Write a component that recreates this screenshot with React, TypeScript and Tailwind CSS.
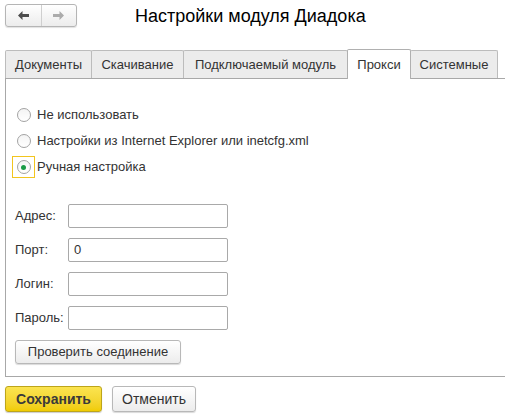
import React from 'react';

const tabs = [
  { title: 'Документы', w: 'w-[87px]' },
  { title: 'Скачивание', w: 'w-[93px]' },
  { title: 'Подключаемый модуль', w: 'w-[165px]' },
  { title: 'Прокси', w: 'w-[64px]' },
  { title: 'Системные', w: 'w-[88px]' },
];
const fields = [
  { label: 'Адрес:', value: '' },
  { label: 'Порт:', value: '0' },
  { label: 'Логин:', value: '' },
  { label: 'Пароль:', value: '' },
];
const options = ['Не использовать', 'Настройки из Internet Explorer или inetcfg.xml', 'Ручная настройка'];

const Radio: React.FC<{ checked?: boolean }> = ({ checked }) => (
  <span className="w-[14px] h-[14px] rounded-full border border-[#a3a3a3] bg-gradient-to-b from-[#f4f4f4] to-white flex items-center justify-center">
    {checked && <span className="w-[5px] h-[5px] rounded-full bg-[#199b45]" />}
  </span>
);

export default function App() {
  const active = 3;
  return (
    <div
      className="w-[505px] h-[415px] overflow-hidden bg-white text-[13px] text-[#333]"
      style={{ fontFamily: '"Liberation Sans", Arial, sans-serif' }}
    >
      {/* шапка */}
      <div className="flex items-center pt-[4px] pl-[5px]">
        <div className="flex w-[72px] h-[23px] rounded-[3px] border border-[#b5b5b5] bg-gradient-to-b from-white to-[#ececec] shadow-[0_1px_1px_rgba(0,0,0,0.12)]">
          <button className="flex-1 flex items-center justify-center border-r border-[#cfcfcf]">
            <svg width="11" height="9" viewBox="0 0 11 9">
              <path d="M0 4.5 L4.5 0 V3 H11 V6 H4.5 V9 Z" fill="#4d4d4d" />
            </svg>
          </button>
          <button className="flex-1 flex items-center justify-center">
            <svg width="11" height="9" viewBox="0 0 11 9">
              <path d="M11 4.5 L6.5 0 V3 H0 V6 H6.5 V9 Z" fill="#ababab" />
            </svg>
          </button>
        </div>
        <h1 className="ml-[58px] text-[18px] text-black leading-none">Настройки модуля Диадока</h1>
      </div>

      {/* вкладки */}
      <div className="flex items-end mt-[22px] pl-[5px] h-[29px]">
        {tabs.map((t, i) => (
          <div
            key={t.title}
            className={
              i === active
                ? `${t.w} relative z-10 h-[30px] -mb-px -ml-px flex items-center justify-center bg-white border border-b-0 border-[#b0b0b0] rounded-t-[2px]`
                : `${t.w} h-[28px] flex items-center justify-center bg-[#ececec] border border-b-0 border-[#bcbcbc] rounded-t-[2px] ${i === 0 ? '' : '-ml-px'}`
            }
          >
            {t.title}
          </div>
        ))}
      </div>

      {/* панель */}
      <div className="ml-[5px] w-[520px] h-[299px] border border-[#a8a8a8] pt-[23px] pl-[6px]">
        {options.map((o, i) => (
          <div key={o} className="h-[26px] flex items-center">
            <span
              className={`w-[23px] h-[22px] flex items-center justify-center border ${
                i === 2 ? 'border-[#f2c51e]' : 'border-transparent'
              }`}
            >
              <Radio checked={i === 2} />
            </span>
            <span className="ml-[2px]">{o}</span>
          </div>
        ))}

        <div className="mt-[24px] pl-[3px] flex flex-col items-start gap-[10px]">
          {fields.map((f) => (
            <div key={f.label} className="flex items-center h-[24px]">
              <span className="w-[53px]">{f.label}</span>
              <div className="w-[160px] h-[24px] border border-[#a9a9a9] rounded-[2px] px-[5px] flex items-center bg-white">
                {f.value}
              </div>
            </div>
          ))}
          <button className="w-[166px] h-[24px] rounded-[3px] border border-[#b8b8b8] bg-gradient-to-b from-white to-[#ececec] shadow-[0_1px_1px_rgba(0,0,0,0.15)] text-[#333]">
            Проверить соединение
          </button>
        </div>
      </div>

      {/* кнопки */}
      <div className="flex gap-[10px] mt-[9px] pl-[5px]">
        <button className="w-[97px] h-[26px] rounded-[3px] border border-[#bda51a] bg-gradient-to-b from-[#fbe44f] to-[#f0cc00] shadow-[0_1px_1px_rgba(0,0,0,0.2)] font-bold text-[14px] text-[#3a3a3a]">
          Сохранить
        </button>
        <button className="w-[84px] h-[26px] rounded-[3px] border border-[#b8b8b8] bg-gradient-to-b from-white to-[#ececec] shadow-[0_1px_1px_rgba(0,0,0,0.15)] text-[14px] text-[#333]">
          Отменить
        </button>
      </div>
    </div>
  );
}
